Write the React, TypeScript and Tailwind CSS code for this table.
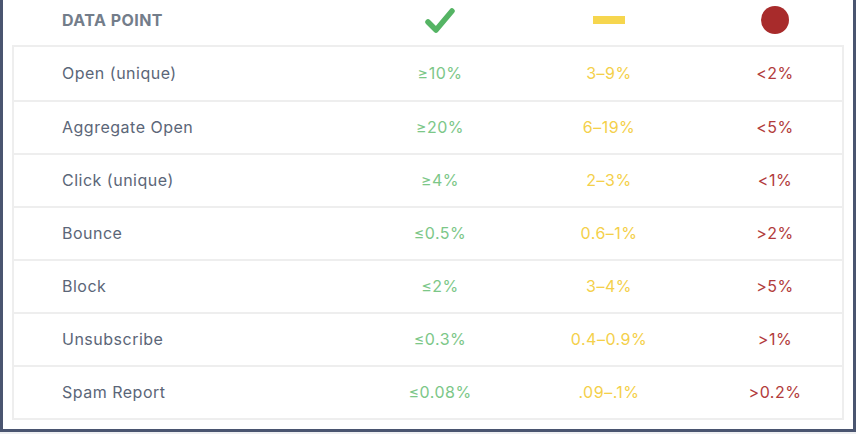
const rows = [
  { label: 'Open (unique)', good: '≥10%', ok: '3–9%', bad: '<2%' },
  { label: 'Aggregate Open', good: '≥20%', ok: '6–19%', bad: '<5%' },
  { label: 'Click (unique)', good: '≥4%', ok: '2–3%', bad: '<1%' },
  { label: 'Bounce', good: '≤0.5%', ok: '0.6–1%', bad: '>2%' },
  { label: 'Block', good: '≤2%', ok: '3–4%', bad: '>5%' },
  { label: 'Unsubscribe', good: '≤0.3%', ok: '0.4–0.9%', bad: '>1%' },
  { label: 'Spam Report', good: '≤0.08%', ok: '.09–.1%', bad: '>0.2%' },
];

const cols = 'grid grid-cols-[356px_140px_198px_1fr] items-center';

export default function App() {
  return (
    <div className="h-[434px] w-[856px] bg-[#eeeff1] font-['Inter',sans-serif]">
      <div className="h-[432px] border-x-[3px] border-b-[3px] border-[#4a5570] bg-white px-[9px]">
        <div className={`${cols} h-[45px] px-[2px] pb-[5px]`}>
          <div className="pl-[48px] text-[16px] font-bold tracking-[0.45px] text-[#737d8a]">DATA POINT</div>
          <div className="flex justify-center">
            <svg width="32" height="28" viewBox="0 0 32 28">
              <path d="M4 16 L12 24 L28 5" fill="none" stroke="#55b464" strokeWidth="5.5" strokeLinecap="round" strokeLinejoin="round" />
            </svg>
          </div>
          <div className="flex justify-center">
            <div className="h-[8px] w-[32px] bg-[#f6d64e]" />
          </div>
          <div className="flex justify-center">
            <div className="h-[28px] w-[28px] rounded-full bg-[#a82b2b]" />
          </div>
        </div>
        <div className="border-2 border-[#eeeeee]">
          {rows.map((r, i) => (
            <div key={r.label} className={`${cols} h-[53px] pb-[2px] text-[16px] tracking-[0.5px] ${i > 0 ? 'border-t-2 border-[#eeeeee]' : ''}`}>
              <div className="pl-[48px] text-[#5b6678]">{r.label}</div>
              <div className="text-center text-[#7cc788]">{r.good}</div>
              <div className="text-center text-[#f4d04a]">{r.ok}</div>
              <div className="text-center text-[#b23b3b]">{r.bad}</div>
            </div>
          ))}
        </div>
      </div>
    </div>
  );
}
